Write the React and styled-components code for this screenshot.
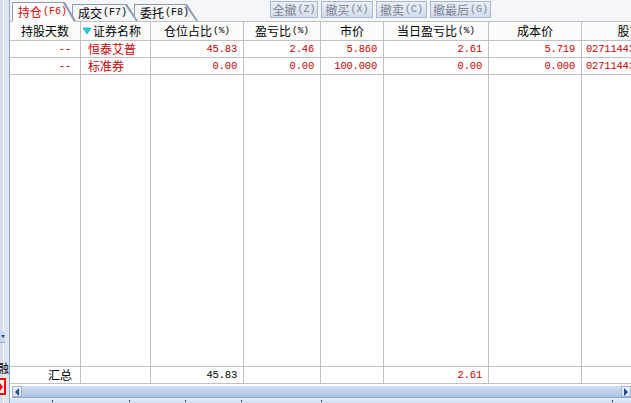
import React from 'react';
import styled, { createGlobalStyle } from 'styled-components';

const GlobalStyle = createGlobalStyle`
  html, body {
    margin: 0;
    padding: 0;
    background: #ffffff;
  }
  body {
    font-family: "Noto Sans CJK SC", "Liberation Sans", sans-serif;
  }
`;

const COLS = [71, 70, 93, 77, 63, 105, 93, 120, 100];
const TEMPLATE = COLS.map((c) => `${c}px`).join(' ');
const LINE = '#c0c0c0';
const RED = '#c80000';

const Frame = styled.div`
  display: flex;
  width: 631px;
  height: 403px;
  overflow: hidden;
  background: #f4f6fa;
`;

const LeftStrip = styled.div`
  width: 10px;
  flex: none;
  box-sizing: border-box;
  border-right: 1px solid #8fa6cd;
  background: linear-gradient(to right, #d3dcea 0 3px, #f4f7fb 3px 4px, #dde5f0 4px);
  display: flex;
  flex-direction: column;
  justify-content: flex-end;
  overflow: hidden;
  padding-bottom: 8px;
`;

const DropBtn = styled.div`
  width: 5px;
  height: 11px;
  background: #c9d6eb;
  border-bottom: 1px solid #98acd0;
  display: flex;
  align-items: center;
  justify-content: center;
  margin-bottom: 17px;
  &::after {
    content: '';
    border-left: 2px solid transparent;
    border-right: 2px solid transparent;
    border-top: 3px solid #2b4a84;
  }
`;

const EdgeChar = styled.div`
  height: 15px;
  display: flex;
  justify-content: flex-end;
  align-items: center;
  font-size: 12px;
  line-height: 1;
  color: #000;
  margin-bottom: 3px;
  span {
    flex: none;
    width: 12px;
  }
`;

const RedBox = styled.div`
  width: 6px;
  height: 17px;
  box-sizing: border-box;
  border: 2px solid #ff0000;
  border-left: none;
  background: #ffffff;
  display: flex;
  align-items: center;
  &::after {
    content: '';
    border-top: 4px solid transparent;
    border-bottom: 4px solid transparent;
    border-left: 3px solid #ff0000;
  }
`;

const Main = styled.div`
  flex: 1;
  min-width: 0;
  display: flex;
  flex-direction: column;
  overflow: hidden;
`;

const TopBar = styled.div`
  height: 21px;
  flex: none;
  display: flex;
  align-items: flex-start;
  background: #f4f6fa;
`;

const TabGroup = styled.div`
  width: 260px;
  height: 21px;
  box-sizing: border-box;
  padding-left: 2px;
  display: flex;
  align-items: flex-end;
`;

const Tab = styled.div`
  position: relative;
  z-index: ${(p) => p.$z};
  width: ${(p) => p.$w}px;
  height: ${(p) => (p.$active ? 19 : 17)}px;
  margin-right: -4px;
  box-sizing: border-box;
  padding-left: 6px;
  padding-top: 1px;
  display: flex;
  align-items: center;
  font-size: 12px;
  line-height: 1;
  color: ${(p) => (p.$active ? '#e00000' : '#000000')};
  &::before,
  &::after {
    content: '';
    position: absolute;
    z-index: -1;
    clip-path: polygon(0 100%, 0 0, calc(100% - 11px) 0, 100% 100%);
  }
  &::before {
    inset: 0;
    background: #8e9cb2;
  }
  &::after {
    top: 1px;
    left: 1px;
    right: 2px;
    bottom: ${(p) => (p.$active ? -1 : 0)}px;
    background: ${(p) => (p.$active ? '#ffffff' : '#f6f7f9')};
  }
`;

const Key = styled.span`
  font-family: "Liberation Mono", monospace;
  font-size: 10px;
  margin-left: 1px;
`;

const ButtonGroup = styled.div`
  display: flex;
  gap: 3px;
  margin-top: 1px;
`;

const ActionButton = styled.div`
  width: ${(p) => p.$w}px;
  height: 17px;
  box-sizing: border-box;
  border: 1px solid #aab8cd;
  background: linear-gradient(#e9eff7, #d2dcea);
  color: #7d8593;
  font-size: 12px;
  line-height: 1;
  display: flex;
  align-items: center;
  justify-content: center;
`;

const Grid = styled.div`
  flex: 1;
  min-height: 0;
  display: flex;
  flex-direction: column;
  background: #ffffff;
`;

const Row = styled.div`
  display: grid;
  grid-template-columns: ${TEMPLATE};
  flex: ${(p) => (p.$fill ? '1' : 'none')};
  height: ${(p) => (p.$fill ? 'auto' : `${p.$h}px`)};
  box-sizing: border-box;
  border-top: ${(p) => (p.$top ? `1px solid ${LINE}` : 'none')};
  border-bottom: ${(p) => (p.$fill ? 'none' : `1px solid ${LINE}`)};
  background: ${(p) => (p.$head ? '#fcfcfc' : '#ffffff')};
`;

const Cell = styled.div`
  box-sizing: border-box;
  border-right: 1px solid ${LINE};
  display: flex;
  align-items: center;
  justify-content: ${(p) => p.$align || 'flex-start'};
  padding: 0 ${(p) => p.$pr ?? 0}px 0 ${(p) => p.$pl ?? 0}px;
  overflow: hidden;
  white-space: nowrap;
  font-size: 12px;
  line-height: 1;
  color: ${(p) => p.$color || '#000000'};
`;

const Num = styled.span`
  font-family: "Liberation Mono", monospace;
  font-size: 10.5px;
  letter-spacing: -0.2px;
`;

const Pct = styled.span`
  font-family: "Liberation Mono", monospace;
  font-size: 9.5px;
  margin-left: 1px;
`;

const SortMark = styled.svg`
  width: 8px;
  height: 8px;
  margin-right: 2px;
  flex: none;
`;

const ScrollArea = styled.div`
  flex: none;
  height: 14px;
  padding-top: 2px;
  padding-left: 2px;
  box-sizing: border-box;
  background: #ffffff;
  display: flex;
`;

const ScrollBar = styled.div`
  flex: 1;
  display: flex;
  border-bottom: 1px solid #8ea6d4;
  background: linear-gradient(#d2def1, #aec2e3);
`;

const Arrow = styled.div`
  width: 10px;
  flex: none;
  box-sizing: border-box;
  border: 1px solid #9db2d7;
  background: linear-gradient(#eef3fb, #d3def0);
  display: flex;
  align-items: center;
  justify-content: center;
  &::after {
    content: '';
    border-top: 4px solid transparent;
    border-bottom: 4px solid transparent;
    ${(p) => (p.$dir === 'left' ? 'border-right' : 'border-left')}: 4px solid #234a8e;
  }
`;

const Track = styled.div`
  flex: 1;
`;

const StatusBar = styled.div`
  flex: none;
  height: 5px;
  display: flex;
  background: linear-gradient(#e4ecf8, #d3e0f3);
`;

const StatusSeg = styled.div`
  flex: none;
  width: ${(p) => p.$w}px;
  position: relative;
  &::after {
    content: '';
    position: absolute;
    right: 0;
    bottom: 1px;
    width: 1px;
    height: 2px;
    background: #30384a;
  }
`;

const positions = [
  { days: '--', name: '恒泰艾普', pos: '45.83', pl: '2.46', price: '5.860', day: '2.61', cost: '5.719', acct: '0271144383' },
  { days: '--', name: '标准券', pos: '0.00', pl: '0.00', price: '100.000', day: '0.00', cost: '0.000', acct: '0271144383' },
];

const numCell = (v) => (
  <Cell $align="flex-end" $pr={6} $color={RED}>
    <Num>{v}</Num>
  </Cell>
);

export default function App() {
  return (
    <>
      <GlobalStyle />
      <Frame>
        <LeftStrip>
          <DropBtn />
          <EdgeChar>
            <span>融</span>
          </EdgeChar>
          <RedBox />
        </LeftStrip>
        <Main>
          <TopBar>
            <TabGroup>
              <Tab $active $w={64} $z={3}>
                持仓<Key>(F6)</Key>
              </Tab>
              <Tab $w={66} $z={2}>
                成交<Key>(F7)</Key>
              </Tab>
              <Tab $w={64} $z={1}>
                委托<Key>(F8)</Key>
              </Tab>
            </TabGroup>
            <ButtonGroup>
              <ActionButton $w={48}>
                全撤<Key>(Z)</Key>
              </ActionButton>
              <ActionButton $w={52}>
                撤买<Key>(X)</Key>
              </ActionButton>
              <ActionButton $w={51}>
                撤卖<Key>(C)</Key>
              </ActionButton>
              <ActionButton $w={61}>
                撤最后<Key>(G)</Key>
              </ActionButton>
            </ButtonGroup>
          </TopBar>

          <Grid>
            <Row $head $top $h={20}>
              <Cell $align="center">持股天数</Cell>
              <Cell $pl={2}>
                <SortMark viewBox="0 0 8 8">
                  <polygon points="0,1 8,1 4,7" fill="#1fd0d6" stroke="#0b9aa6" strokeWidth="0.6" />
                </SortMark>
                证券名称
              </Cell>
              <Cell $align="center">
                仓位占比<Pct>(%)</Pct>
              </Cell>
              <Cell $align="center">
                盈亏比<Pct>(%)</Pct>
              </Cell>
              <Cell $align="center">市价</Cell>
              <Cell $align="center">
                当日盈亏比<Pct>(%)</Pct>
              </Cell>
              <Cell $align="center">成本价</Cell>
              <Cell $align="center">股东代码</Cell>
              <Cell $align="center">帐号类别</Cell>
            </Row>

            {positions.map((r) => (
              <Row key={r.name} $h={17}>
                <Cell $align="flex-end" $pr={9} $color={RED}>
                  <Num>{r.days}</Num>
                </Cell>
                <Cell $pl={7} $color={RED}>
                  {r.name}
                </Cell>
                {numCell(r.pos)}
                {numCell(r.pl)}
                {numCell(r.price)}
                {numCell(r.day)}
                {numCell(r.cost)}
                <Cell $pl={4} $color={RED}>
                  <Num>{r.acct}</Num>
                </Cell>
                <Cell />
              </Row>
            ))}

            <Row $fill>
              {COLS.map((c, i) => (
                <Cell key={i} />
              ))}
            </Row>

            <Row $top $h={18}>
              <Cell $align="flex-end" $pr={8}>
                汇总
              </Cell>
              <Cell />
              <Cell $align="flex-end" $pr={6}>
                <Num>45.83</Num>
              </Cell>
              <Cell />
              <Cell />
              <Cell $align="flex-end" $pr={6} $color={RED}>
                <Num>2.61</Num>
              </Cell>
              <Cell />
              <Cell />
              <Cell />
            </Row>
          </Grid>

          <ScrollArea>
            <ScrollBar>
              <Arrow $dir="left" />
              <Track />
              <Arrow $dir="right" />
            </ScrollBar>
          </ScrollArea>

          <StatusBar>
            {[43, 77, 56, 56, 80, 291].map((w, i) => (
              <StatusSeg key={i} $w={w} />
            ))}
          </StatusBar>
        </Main>
      </Frame>
    </>
  );
}
